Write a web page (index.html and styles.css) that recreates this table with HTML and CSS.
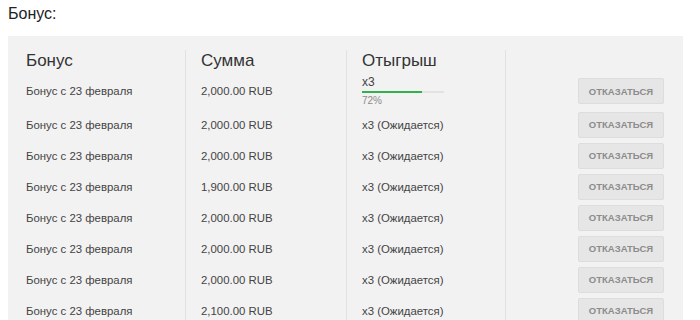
FILE: index.html
```html
<!DOCTYPE html>
<html lang="ru">
<head>
<meta charset="utf-8">
<link rel="stylesheet" href="styles.css">
</head>
<body>
<h2 class="title">Бонус:</h2>
<div class="panel">
  <div class="grid">
    <div class="cell head c1">Бонус</div>
    <div class="cell head c2">Сумма</div>
    <div class="cell head c3">Отыгрыш</div>
    <div class="cell head c4"></div>

    <div class="cell r1 c1">Бонус с 23 февраля</div>
    <div class="cell r1 c2">2,000.00 RUB</div>
    <div class="cell r1 c3">
      <div class="wager">
        <div class="wager-x">x3</div>
        <div class="bar"><div class="bar-fill" style="width:73%"></div></div>
        <div class="wager-pct">72%</div>
      </div>
    </div>
    <div class="cell r1 c4"><button class="btn">Отказаться</button></div>

    <div class="cell c1">Бонус с 23 февраля</div>
    <div class="cell c2">2,000.00 RUB</div>
    <div class="cell c3">x3 (Ожидается)</div>
    <div class="cell c4"><button class="btn">Отказаться</button></div>

    <div class="cell c1">Бонус с 23 февраля</div>
    <div class="cell c2">2,000.00 RUB</div>
    <div class="cell c3">x3 (Ожидается)</div>
    <div class="cell c4"><button class="btn">Отказаться</button></div>

    <div class="cell c1">Бонус с 23 февраля</div>
    <div class="cell c2">1,900.00 RUB</div>
    <div class="cell c3">x3 (Ожидается)</div>
    <div class="cell c4"><button class="btn">Отказаться</button></div>

    <div class="cell c1">Бонус с 23 февраля</div>
    <div class="cell c2">2,000.00 RUB</div>
    <div class="cell c3">x3 (Ожидается)</div>
    <div class="cell c4"><button class="btn">Отказаться</button></div>

    <div class="cell c1">Бонус с 23 февраля</div>
    <div class="cell c2">2,000.00 RUB</div>
    <div class="cell c3">x3 (Ожидается)</div>
    <div class="cell c4"><button class="btn">Отказаться</button></div>

    <div class="cell c1">Бонус с 23 февраля</div>
    <div class="cell c2">2,000.00 RUB</div>
    <div class="cell c3">x3 (Ожидается)</div>
    <div class="cell c4"><button class="btn">Отказаться</button></div>

    <div class="cell c1">Бонус с 23 февраля</div>
    <div class="cell c2">2,100.00 RUB</div>
    <div class="cell c3">x3 (Ожидается)</div>
    <div class="cell c4"><button class="btn">Отказаться</button></div>
  </div>
</div>
</body>
</html>
```

FILE: styles.css
```css
html, body {
  margin: 0;
  padding: 0;
  background: #fff;
  overflow: hidden;
}

body {
  font-family: "Liberation Sans", Arial, sans-serif;
  color: #444;
}

.title {
  margin: 0 0 14px 0;
  padding: 5px 8px 0 8px;
  font-size: 16px;
  line-height: 17px;
  font-weight: normal;
  color: #222;
}

.panel {
  margin-left: 8px;
  width: 675px;
  box-sizing: border-box;
  background: #f2f2f2;
  padding: 14px 19px 0 18px;
  height: 300px;
}

.grid {
  display: grid;
  grid-template-columns: 160px 161px 159px 158px;
  grid-auto-rows: 31px;
  grid-template-rows: 23px 36px;
}

.cell {
  display: flex;
  align-items: center;
  font-size: 11.4px;
  line-height: 14px;
  color: #444;
  box-sizing: border-box;
}

.c1, .c2, .c3 {
  border-right: 1px solid #e1e1e1;
}

.c2, .c3 {
  padding-left: 15px;
}

.c4 {
  justify-content: flex-end;
}

.head {
  align-items: flex-start;
  padding-top: 1px;
  font-size: 17px;
  line-height: 20px;
  color: #333;
}

.wager {
  display: flex;
  flex-direction: column;
  width: 82px;
}

.wager-x {
  font-size: 12px;
  line-height: 13px;
  color: #444;
}

.bar {
  margin-top: 2px;
  height: 2px;
  background: #e3e3e3;
}

.bar-fill {
  height: 100%;
  background: #2eb34f;
}

.wager-pct {
  margin-top: 2px;
  font-size: 10px;
  line-height: 12px;
  color: #8a8a8a;
}

.btn {
  width: 86px;
  height: 26px;
  margin: 0;
  padding: 0;
  box-sizing: border-box;
  background: #e6e6e6;
  border: 1px solid #dddddd;
  border-radius: 2px;
  font-family: "Liberation Sans", Arial, sans-serif;
  font-size: 9.5px;
  font-weight: bold;
  text-transform: uppercase;
  color: #8c8c8c;
  text-align: center;
}
```
